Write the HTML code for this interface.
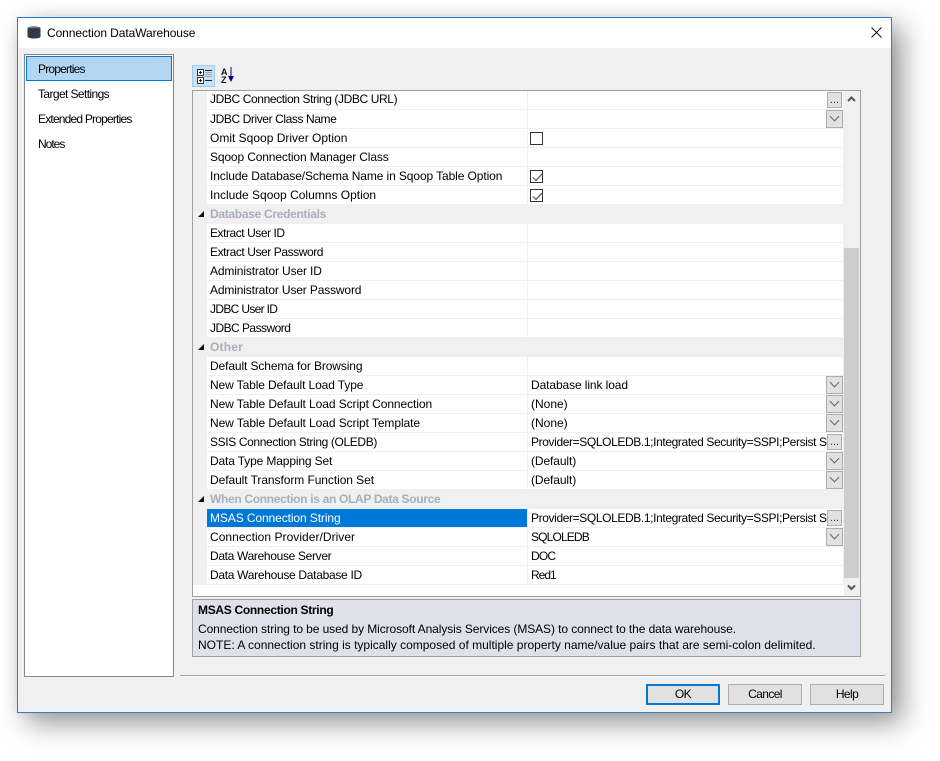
<!DOCTYPE html>
<html><head><meta charset="utf-8"><style>
html,body{margin:0;padding:0;background:#fff}
body{width:940px;height:761px;position:relative;overflow:hidden;font:12px/18px "Liberation Sans",sans-serif;color:#000}
div,span{position:absolute;box-sizing:border-box;white-space:nowrap}
#dlg{left:17px;top:17px;width:875px;height:696px;background:#f0f0f0;border:1px solid #2b7fd0;box-shadow:10px 10px 26px 0 rgba(0,0,0,.42),0 0 10px rgba(0,0,0,.06)}
.r{left:207px;width:636px;height:19px;background:#fff;border-bottom:1px solid #f0f0f0}
.r:before{content:"";position:absolute;left:320px;top:0;width:1px;height:19px;background:#f0f0f0}
.n{left:3px;top:0}
.v{left:324px;top:0}
.c{left:193px;width:650px;height:19px;background:#f0f0f0;font-weight:bold;color:#a8afbb}
.c .n{left:17px}
.c:before{content:"";position:absolute;left:5px;top:6px;border-style:solid;border-width:0 0 6px 6px;border-color:transparent transparent #111 transparent}
.d{left:619px;top:0;width:17px;height:18px;background:#e1e1e1;border:1px solid #adadad}
.d:after{content:"";position:absolute;left:4px;top:2px;width:6px;height:6px;border-right:1px solid #666;border-bottom:1px solid #666;transform:rotate(45deg)}
.e{left:620px;top:1px;width:15px;height:16px;background:#e1e1e1;border:1px solid #adadad;font-size:11px;line-height:15px;text-align:center;color:#333}
.k{left:323px;top:3px;width:13px;height:13px;background:#fff;border:1px solid #333}
.k svg{position:absolute;left:1px;top:1px}
.b{top:684px;width:74px;height:21px;background:#e1e1e1;border:1px solid #adadad;text-align:center;line-height:19px}
.m{left:38px}
</style></head><body>
<div id="dlg"></div>
<div style="left:18px;top:18px;width:873px;height:30px;background:#fff"></div>
<svg style="position:absolute;left:27px;top:26px" width="14" height="13"><path d="M.5 2.500C.5 1.100 3.400.500 7 .500s6.500.600 6.500 2v8c0 1.200-2.900 2-6.500 2s-6.500-.800-6.500-2z" fill="#2f3a46"/><path d="M2 2.200C3 1.500 11 1.500 12 2.200" stroke="#7d8187" fill="none"/></svg>
<div style="left:47px;top:24px;letter-spacing:-.08px">Connection DataWarehouse</div>
<svg style="position:absolute;left:871px;top:27px" width="11" height="11"><path d="M.5.500l10 10M10.500.500l-10 10" stroke="#111" stroke-width="1" fill="none"/></svg>

<div style="left:24px;top:54px;width:150px;height:623px;background:#fff;border:1px solid #828790"></div>
<div style="left:26px;top:56px;width:146px;height:25px;background:#b3d7f3;border:1px solid #0078d7"></div>
<div class="m" style="top:60px;letter-spacing:-.8px">Properties</div>
<div class="m" style="top:85px;letter-spacing:-.6px">Target Settings</div>
<div class="m" style="top:110px;letter-spacing:-.8px">Extended Properties</div>
<div class="m" style="top:135px;letter-spacing:-1px">Notes</div>

<div style="left:192px;top:65px;width:23px;height:22px;background:#c9e0f5;border:1px solid #9ccbef"></div>
<svg style="position:absolute;left:197px;top:69px" width="16" height="15"><g fill="#fff" stroke="#333"><rect x=".5" y=".5" width="6" height="6"/><rect x=".5" y="8.500" width="6" height="6"/></g><path d="M2 3.500h3M3.500 2v3M2 11.500h3M3.500 10v3M8 1.500h7M8 11.500h7" stroke="#222"/><path d="M8 3.500h7M8 5.500h7M8 7.500h7" stroke="#aaa"/></svg>
<div style="left:221px;top:67px;font:bold 9px/10px 'Liberation Sans',sans-serif;width:10px;color:#111">A</div>
<div style="left:221px;top:75px;font:bold 9px/10px 'Liberation Sans',sans-serif;width:10px;color:#111">Z</div>
<svg style="position:absolute;left:227px;top:67px" width="8" height="16"><path d="M4 0v10" stroke="#00007f"/><path d="M1 9h6l-3 6z" fill="#00007f"/></svg>

<div style="left:192px;top:90px;width:669px;height:507px;background:#f0f0f0;border:1px solid #a0a0a0"></div>
<div style="left:193px;top:585px;width:651px;height:11px;background:#fff"></div>
<div style="left:193px;top:91px;width:14px;height:494px;background:#f0f0f0"></div>

<div class="r" style="top:91px"><span class="n" style="top:-1px;letter-spacing:-.39px">JDBC Connection String (JDBC URL)</span><span class="e">...</span></div>
<div class="r" style="top:110px"><span class="n" style="letter-spacing:-.41px">JDBC Driver Class Name</span><span class="d"></span></div>
<div class="r" style="top:129px"><span class="n">Omit Sqoop Driver Option</span><span class="k"></span></div>
<div class="r" style="top:148px"><span class="n" style="letter-spacing:-.14px">Sqoop Connection Manager Class</span></div>
<div class="r" style="top:167px"><span class="n" style="letter-spacing:-.1px">Include Database/Schema Name in Sqoop Table Option</span><span class="k"><svg width="11" height="11"><path d="M1 5.500l3 3 6-6.500" stroke="#666" stroke-width="1.300" fill="none"/></svg></span></div>
<div class="r" style="top:186px"><span class="n">Include Sqoop Columns Option</span><span class="k"><svg width="11" height="11"><path d="M1 5.500l3 3 6-6.500" stroke="#666" stroke-width="1.300" fill="none"/></svg></span></div>
<div class="c" style="top:205px"><span class="n" style="letter-spacing:-.3px">Database Credentials</span></div>
<div class="r" style="top:224px"><span class="n" style="letter-spacing:-.45px">Extract User ID</span></div>
<div class="r" style="top:243px"><span class="n" style="letter-spacing:-.43px">Extract User Password</span></div>
<div class="r" style="top:262px"><span class="n" style="letter-spacing:-.14px">Administrator User ID</span></div>
<div class="r" style="top:281px"><span class="n" style="letter-spacing:-.15px">Administrator User Password</span></div>
<div class="r" style="top:300px"><span class="n" style="letter-spacing:-.67px">JDBC User ID</span></div>
<div class="r" style="top:319px"><span class="n" style="letter-spacing:-.54px">JDBC Password</span></div>
<div class="c" style="top:338px"><span class="n" style="letter-spacing:.2px">Other</span></div>
<div class="r" style="top:357px"><span class="n" style="letter-spacing:-.11px">Default Schema for Browsing</span></div>
<div class="r" style="top:376px"><span class="n" style="letter-spacing:-.11px">New Table Default Load Type</span><span class="v" style="letter-spacing:-.1px">Database link load</span><span class="d"></span></div>
<div class="r" style="top:395px"><span class="n" style="letter-spacing:-.08px">New Table Default Load Script Connection</span><span class="v">(None)</span><span class="d"></span></div>
<div class="r" style="top:414px"><span class="n" style="letter-spacing:-.08px">New Table Default Load Script Template</span><span class="v">(None)</span><span class="d"></span></div>
<div class="r" style="top:433px"><span class="n" style="letter-spacing:-.37px">SSIS Connection String (OLEDB)</span><span class="v" style="width:296px;overflow:hidden;letter-spacing:-.38px">Provider=SQLOLEDB.1;Integrated Security=SSPI;Persist Security</span><span class="e">...</span></div>
<div class="r" style="top:452px"><span class="n" style="letter-spacing:-.14px">Data Type Mapping Set</span><span class="v" style="letter-spacing:-.1px">(Default)</span><span class="d"></span></div>
<div class="r" style="top:471px"><span class="n" style="letter-spacing:-.07px">Default Transform Function Set</span><span class="v" style="letter-spacing:-.1px">(Default)</span><span class="d"></span></div>
<div class="c" style="top:490px"><span class="n" style="letter-spacing:-.32px">When Connection is an OLAP Data Source</span></div>
<div class="r" style="top:509px"><span style="left:0;top:0;width:320px;height:18px;background:#0078d7"></span><span class="n" style="color:#fff;letter-spacing:-.1px">MSAS Connection String</span><span class="v" style="width:296px;overflow:hidden;letter-spacing:-.38px">Provider=SQLOLEDB.1;Integrated Security=SSPI;Persist Security</span><span class="e">...</span></div>
<div class="r" style="top:528px"><span class="n" style="letter-spacing:.04px">Connection Provider/Driver</span><span class="v" style="letter-spacing:-.85px">SQLOLEDB</span><span class="d"></span></div>
<div class="r" style="top:547px"><span class="n" style="letter-spacing:-.33px">Data Warehouse Server</span><span class="v" style="letter-spacing:-.8px">DOC</span></div>
<div class="r" style="top:566px"><span class="n" style="letter-spacing:-.3px">Data Warehouse Database ID</span><span class="v" style="letter-spacing:-1px">Red1</span></div>

<div style="left:844px;top:248px;width:15px;height:330px;background:#cdcdcd"></div>
<svg style="position:absolute;left:847px;top:95px" width="9" height="9"><path d="M1 6l3.500-3.500L8 6" stroke="#555" stroke-width="2" fill="none"/></svg>
<svg style="position:absolute;left:847px;top:583px" width="9" height="9"><path d="M1 2.500L4.500 6 8 2.500" stroke="#555" stroke-width="2" fill="none"/></svg>

<div style="left:192px;top:599px;width:669px;height:58px;background:#dee1e9;border:1px solid #a0a0a0"></div>
<div style="left:198px;top:601px;font-weight:bold;letter-spacing:-.3px">MSAS Connection String</div>
<div style="left:198px;top:620px;letter-spacing:-.09px">Connection string to be used by Microsoft Analysis Services (MSAS) to connect to the data warehouse.</div>
<div style="left:198px;top:636px">NOTE: A connection string is typically composed of multiple property name/value pairs that are semi-colon delimited.</div>

<div style="left:180px;top:675px;width:705px;height:1px;background:#a0a0a0"></div>
<div style="left:180px;top:676px;width:705px;height:1px;background:#fff"></div>
<div class="b" style="left:646px;border:2px solid #0078d7;line-height:17px;letter-spacing:-.6px">OK</div>
<div class="b" style="left:728px;letter-spacing:-.6px">Cancel</div>
<div class="b" style="left:810px;letter-spacing:-.6px">Help</div>
</body></html>
